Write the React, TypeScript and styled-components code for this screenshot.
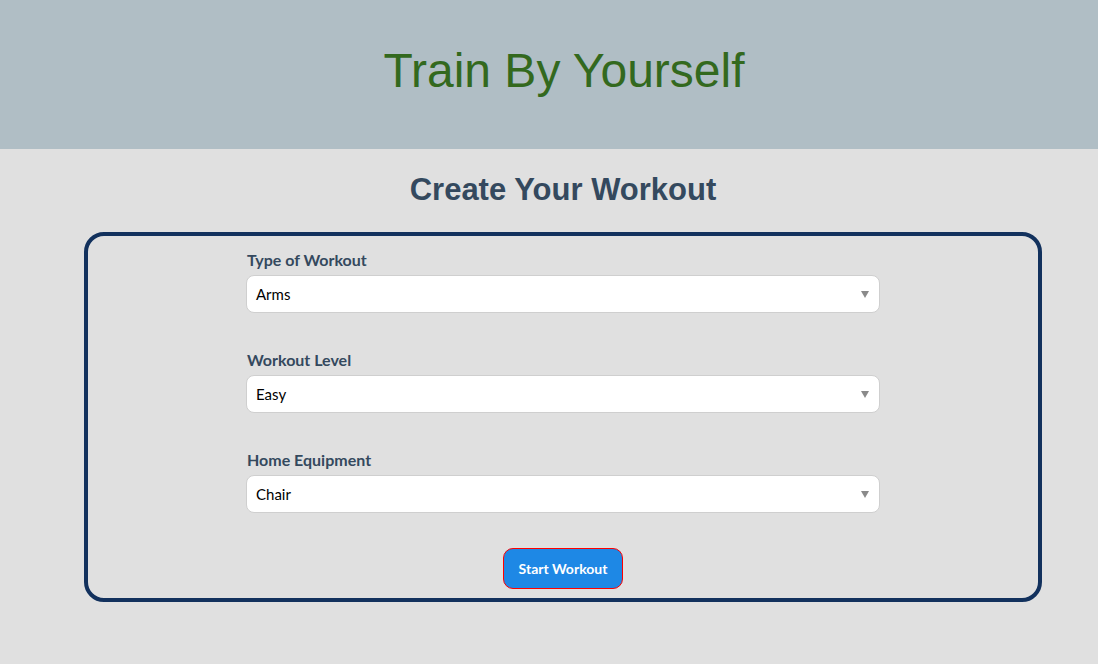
import React from "react";
import styled, { createGlobalStyle } from "styled-components";

const Global = createGlobalStyle`
  html, body { margin: 0; padding: 0; background: #e0e0e0; }
  body { font-family: "Trebuchet MS", "Lato", "Noto Sans", sans-serif; }
`;

const Header = styled.header`
  background: #b0bec5;
  height: 149px;
  display: flex;
  align-items: center;
  justify-content: center;
  padding-left: 30px;
  box-sizing: border-box;
`;

const Title = styled.h1`
  margin: 0 0 8px;
  font-family: "Liberation Sans", Arial, sans-serif;
  font-weight: 400;
  font-size: 48px;
  color: #33691e;
`;

const Main = styled.main`
  padding: 0 56px 0 84px;
`;

const Heading = styled.h2`
  margin: 0;
  padding-top: 23px;
  height: 83px;
  box-sizing: border-box;
  text-align: center;
  font-family: "Liberation Sans", Arial, sans-serif;
  font-weight: 700;
  font-size: 31px;
  color: #34495e;
`;

const Card = styled.form`
  border: 4px solid #12315d;
  border-radius: 20px;
  padding: 14px 0 9px;
  display: flex;
  flex-direction: column;
  align-items: center;
`;

const Field = styled.div`
  width: 634px;
  display: flex;
  flex-direction: column;
  gap: 6px;
  margin-bottom: 37px;
`;

const Label = styled.label`
  font-weight: 700;
  font-size: 16px;
  line-height: 19px;
  color: #34495e;
  padding-left: 1px;
`;

const SelectBox = styled.div`
  position: relative;
  height: 38px;
  background: #fff;
  border: 1px solid #cfcfcf;
  border-radius: 8px;
  box-sizing: border-box;
  display: flex;
  align-items: center;
  padding-left: 9px;
  font-size: 15px;
  color: #000;
`;

const Arrow = styled.span`
  position: absolute;
  right: 10px;
  top: 15px;
  width: 0;
  height: 0;
  border-left: 4px solid transparent;
  border-right: 4px solid transparent;
  border-top: 7px solid #8a8a8a;
`;

const Button = styled.button`
  margin-top: -2px;
  width: 120px;
  height: 41px;
  background: #1e88e5;
  color: #fff;
  border: 1px solid #ff0000;
  border-radius: 10px;
  font-family: inherit;
  font-weight: 700;
  font-size: 14px;
  cursor: pointer;
`;

const fields = [
  { label: "Type of Workout", value: "Arms" },
  { label: "Workout Level", value: "Easy" },
  { label: "Home Equipment", value: "Chair" },
];

export default function App() {
  return (
    <>
      <Global />
      <Header>
        <Title>Train By Yourself</Title>
      </Header>
      <Main>
        <Heading>Create Your Workout</Heading>
        <Card onSubmit={(e) => e.preventDefault()}>
          {fields.map((f) => (
            <Field key={f.label}>
              <Label>{f.label}</Label>
              <SelectBox>
                {f.value}
                <Arrow />
              </SelectBox>
            </Field>
          ))}
          <Button type="submit">Start Workout</Button>
        </Card>
      </Main>
    </>
  );
}
